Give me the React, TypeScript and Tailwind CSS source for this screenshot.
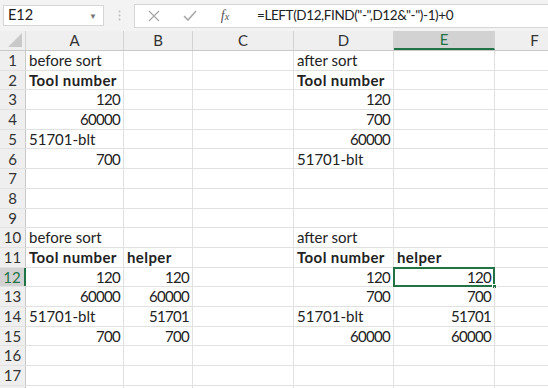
import React from 'react';

const COLS = [
  { id: 'A', w: 'w-[98px]' },
  { id: 'B', w: 'w-[69px]' },
  { id: 'C', w: 'w-[101px]' },
  { id: 'D', w: 'w-[100px]' },
  { id: 'E', w: 'w-[101px]' },
  { id: 'F', w: 'w-[80px]' },
];

type Cell = { v: string; right?: boolean; bold?: boolean };

// 行ごとのセル内容 (A..F)
const DATA: Record<number, Record<string, Cell>> = {
  1: { A: { v: 'before sort' }, D: { v: 'after sort' } },
  2: { A: { v: 'Tool number', bold: true }, D: { v: 'Tool number', bold: true } },
  3: { A: { v: '120', right: true }, D: { v: '120', right: true } },
  4: { A: { v: '60000', right: true }, D: { v: '700', right: true } },
  5: { A: { v: '51701-blt' }, D: { v: '60000', right: true } },
  6: { A: { v: '700', right: true }, D: { v: '51701-blt' } },
  10: { A: { v: 'before sort' }, D: { v: 'after sort' } },
  11: {
    A: { v: 'Tool number', bold: true },
    B: { v: 'helper', bold: true },
    D: { v: 'Tool number', bold: true },
    E: { v: 'helper', bold: true },
  },
  12: {
    A: { v: '120', right: true },
    B: { v: '120', right: true },
    D: { v: '120', right: true },
    E: { v: '120', right: true },
  },
  13: {
    A: { v: '60000', right: true },
    B: { v: '60000', right: true },
    D: { v: '700', right: true },
    E: { v: '700', right: true },
  },
  14: {
    A: { v: '51701-blt' },
    B: { v: '51701', right: true },
    D: { v: '51701-blt' },
    E: { v: '51701', right: true },
  },
  15: {
    A: { v: '700', right: true },
    B: { v: '700', right: true },
    D: { v: '60000', right: true },
    E: { v: '60000', right: true },
  },
};

const ROWS = Array.from({ length: 18 }, (_, i) => i + 1);

export default function App() {
  return (
    <div className="w-[548px] h-[388px] overflow-hidden bg-white text-[#222] font-['Lato','Open_Sans',sans-serif]">
      {/* 数式バー */}
      <div className="h-[31px] bg-[#f3f3f3] flex items-center pl-[3px]">
        <div className="w-[101px] h-[21px] bg-white border border-[#d6d6d6] flex items-center justify-between pl-[4px] pr-[6px]">
          <span className="text-[14.5px] leading-none">E12</span>
          <span className="text-[8px] text-[#777]">▼</span>
        </div>
        <div className="w-[30px] flex justify-center">
          <svg width="3" height="11" viewBox="0 0 3 11">
            <circle cx="1.5" cy="1.5" r="1" fill="#bbb" />
            <circle cx="1.5" cy="5.5" r="1" fill="#bbb" />
            <circle cx="1.5" cy="9.5" r="1" fill="#bbb" />
          </svg>
        </div>
        <div className="flex-1 h-[24px] bg-white border border-[#d6d6d6] border-r-0 flex items-center">
          <div className="w-[36px] flex justify-center ml-[1px]">
            <svg width="12" height="12" viewBox="0 0 12 12">
              <path d="M1 1 L11 11 M11 1 L1 11" stroke="#a8a8a8" strokeWidth="1.2" />
            </svg>
          </div>
          <div className="w-[36px] flex justify-center">
            <svg width="14" height="11" viewBox="0 0 14 11">
              <path d="M1 6 L5 10 L13 1" stroke="#a8a8a8" strokeWidth="1.6" fill="none" />
            </svg>
          </div>
          <div className="w-[34px] flex justify-center">
            <span className="font-['Liberation_Serif',serif] italic text-[14px] text-[#555]">
              f<span className="text-[10px]">x</span>
            </span>
          </div>
          <span className="ml-[15px] text-[13.5px] tracking-[-0.4px]">=LEFT(D12,FIND("-",D12&amp;"-")-1)+0</span>
        </div>
      </div>

      {/* 列見出し */}
      <div className="flex h-[20px] bg-[#efefef] border-b border-[#c8c8c8]">
        <div className="w-[26px] shrink-0 border-r border-[#d4d4d4] relative">
          <svg className="absolute right-[3px] bottom-[3px]" width="14" height="14" viewBox="0 0 14 14">
            <path d="M14 0 L14 14 L0 14 Z" fill="#c9c9c9" />
          </svg>
        </div>
        {COLS.map((c) => (
          <div
            key={c.id}
            className={`${c.w} shrink-0 flex items-center justify-center text-[15px] border-r border-[#d4d4d4] ${
              c.id === 'E' ? 'bg-[#d2d2d2] text-[#217346] border-b-2 border-b-[#217346]' : 'text-[#333]'
            }`}
          >
            {c.id}
          </div>
        ))}
      </div>

      {/* セル */}
      {ROWS.map((r) => (
        <div key={r} className="flex h-[19.7px] border-b border-[#e1e1e1]">
          <div
            className={`w-[26px] shrink-0 flex items-center justify-center text-[15px] border-r ${
              r === 12 ? 'bg-[#d2d2d2] text-[#217346] border-r-2 border-r-[#217346]' : 'bg-[#efefef] text-[#333] border-[#c8c8c8]'
            }`}
          >
            {r < 18 ? r : ''}
          </div>
          {COLS.map((c) => {
            const cell = DATA[r]?.[c.id];
            const selected = r === 12 && c.id === 'E';
            return (
              <div
                key={c.id}
                className={`${c.w} shrink-0 relative flex items-center px-[3px] border-r border-[#e1e1e1] text-[15px] whitespace-nowrap ${
                  cell?.right ? 'justify-end tracking-[-0.7px]' : 'justify-start'
                } ${cell?.bold ? 'font-bold tracking-[0.4px]' : ''}`}
              >
                {cell?.v}
                {selected && (
                  <>
                    <div className="absolute -left-[1px] -top-[1px] -right-[1px] -bottom-[1px] border-2 border-[#217346]" />
                    <div className="absolute -right-[3px] -bottom-[3px] w-[5px] h-[5px] bg-[#217346] border border-white" />
                  </>
                )}
              </div>
            );
          })}
        </div>
      ))}
    </div>
  );
}
